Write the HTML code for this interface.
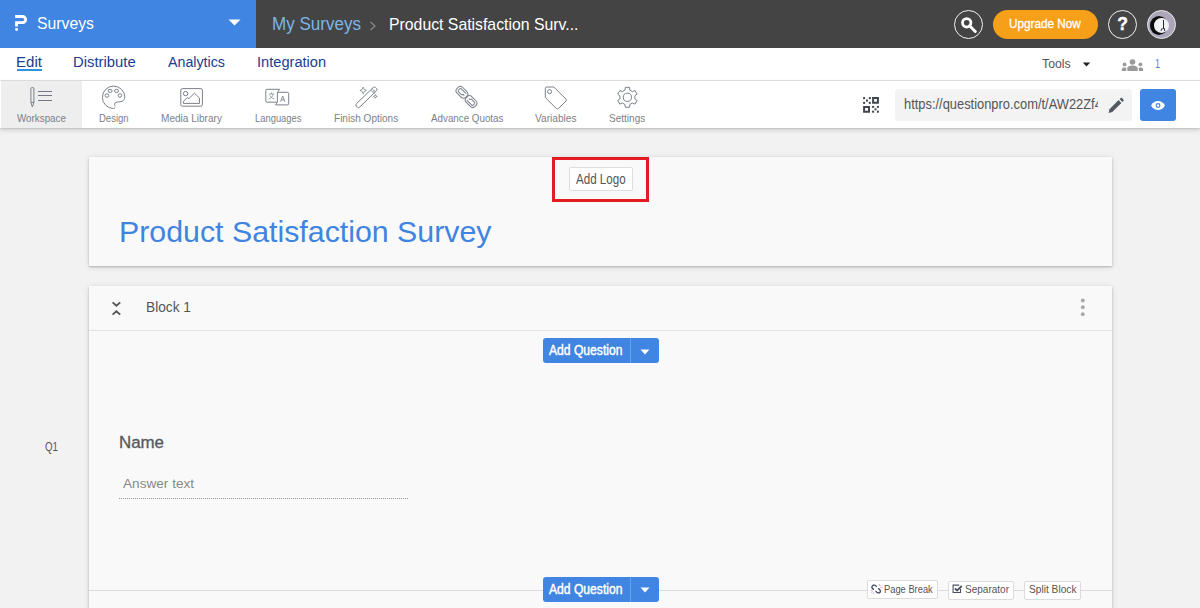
<!DOCTYPE html>
<html><head><meta charset="utf-8">
<style>
*{box-sizing:border-box;margin:0;padding:0}
html,body{width:1200px;height:608px;overflow:hidden;background:#f2f2f2;font-family:"Liberation Sans",sans-serif}
.a{position:absolute}
.t{position:absolute;white-space:nowrap;line-height:1;transform-origin:0 0}
svg{position:absolute;overflow:visible}
.card{position:absolute;background:#f9f9f9;box-shadow:0 1px 2px rgba(0,0,0,.22),0 1px 7px rgba(0,0,0,.10)}
.qb{position:absolute;left:543px;width:116px;height:25px;background:#4085e2;border-radius:3px}
.qb i{position:absolute;left:87px;top:0;width:1px;height:25px;background:#6ba3ea}
.sb{position:absolute;height:19px;background:#fff;border:1px solid #dcdcdc;border-radius:2px}
</style></head><body>
<!-- top bar -->
<div class="a" style="left:0;top:0;width:1200px;height:48px;background:#444"></div>
<div class="a" style="left:0;top:0;width:256px;height:48px;background:#4085e2"></div>
<svg style="left:0;top:0" width="40" height="48">
  <path d="M15.1,16.5 H22.6 A3.1,3.1 0 0 1 22.6,22.7 H16.5 V26.5" fill="none" stroke="#fff" stroke-width="2.8" stroke-linejoin="miter"/>
  <circle cx="16.6" cy="29.55" r="1.45" fill="#fff"/>
</svg>
<svg style="left:228px;top:19px" width="14" height="8"><path d="M0.5,0.5 H12.5 L6.5,6.5 Z" fill="#fff"/></svg>
<svg style="left:369px;top:21px" width="8" height="10"><path d="M1.5,1 L6,5 L1.5,9" fill="none" stroke="#8a8a8a" stroke-width="1.2"/></svg>
<!-- search circle -->
<div class="a" style="left:953.7px;top:9.5px;width:29.8px;height:29.8px;border:1.8px solid #f2f2f2;border-radius:50%"></div>
<svg style="left:954px;top:10px" width="30" height="30">
  <circle cx="12.7" cy="12.8" r="4.2" fill="none" stroke="#fff" stroke-width="2.8"/>
  <path d="M15.6,15.8 L21.3,21.5" stroke="#fff" stroke-width="3" stroke-linecap="round"/>
</svg>
<div class="a" style="left:993px;top:9.6px;width:105px;height:29.6px;background:#f6a01a;border-radius:15px"></div>
<div class="a" style="left:1107.8px;top:9.7px;width:29.6px;height:29.6px;border:1.8px solid #f2f2f2;border-radius:50%"></div>
<div class="t" style="left:1117.2px;top:15.6px;font-size:17.5px;font-weight:bold;color:#fff;-webkit-text-stroke:0.4px #fff">?</div>
<div class="a" style="left:1147.2px;top:9.8px;width:29px;height:29px;border-radius:50%;background:#aba6b9;border:1px solid #e6e6e6;overflow:hidden">
  <div class="a" style="left:1.6px;top:5.6px;width:18.5px;height:19px;border-radius:50%;background:radial-gradient(circle at 30% 50%,#050505 0,#0d0d0d 60%,#333 85%,#777 100%)"></div>
  <div class="a" style="left:5.9px;top:7.4px;width:14.6px;height:14.6px;border-radius:50%;background:radial-gradient(circle at 50% 45%,#f6f7fa 0,#eef0f5 55%,#dcdde6 100%)"></div>
  <div class="a" style="left:14.4px;top:9.6px;width:1.5px;height:8.5px;background:#262626"></div>
  <div class="a" style="left:13px;top:17.5px;width:1.2px;height:3.4px;background:#262626;transform:rotate(30deg)"></div>
  <div class="a" style="left:15.6px;top:17.5px;width:1.2px;height:3.4px;background:#262626;transform:rotate(-15deg)"></div>
</div>
<!-- nav -->
<div class="a" style="left:0;top:48px;width:1200px;height:32px;background:#fff"></div>
<div class="a" style="left:0;top:80px;width:1200px;height:1px;background:#e2e2e2"></div>
<div class="a" style="left:17px;top:69px;width:25px;height:2px;background:#2d95dc"></div>
<svg style="left:1082px;top:61.5px" width="9" height="5"><path d="M0.8,0.6 H8.2 L4.5,4.4 Z" fill="#222"/></svg>
<svg style="left:1121px;top:58.6px" width="23" height="13">
  <circle cx="11.5" cy="3" r="2.8" fill="#999"/>
  <path d="M6.3,12 V10 C6.3,7.4 8.6,6.5 11.5,6.5 C14.4,6.5 16.7,7.4 16.7,10 V12 Z" fill="#999"/>
  <circle cx="3.6" cy="5.4" r="1.9" fill="#999"/>
  <path d="M0.8,12 V10.8 C0.8,9 2,8.4 3.6,8.4 C4.6,8.4 5.2,8.6 5.6,8.9 C5.3,9.4 5.1,10 5.1,10.6 V12 Z" fill="#999"/>
  <circle cx="19.4" cy="5.4" r="1.9" fill="#999"/>
  <path d="M22.2,12 V10.8 C22.2,9 21,8.4 19.4,8.4 C18.4,8.4 17.8,8.6 17.4,8.9 C17.7,9.4 17.9,10 17.9,10.6 V12 Z" fill="#999"/>
</svg>
<!-- toolbar -->
<div class="a" style="left:0;top:81px;width:1200px;height:47px;background:#fff;box-shadow:0 1px 1px rgba(0,0,0,.06),0 2px 5px rgba(0,0,0,.17)"></div>
<div class="a" style="left:1px;top:81px;width:81px;height:47px;background:#eeeeee"></div>
<svg style="left:0;top:81px" width="700" height="47" fill="none" stroke="#7a7f89" stroke-width="1">
  <!-- workspace -->
  <path d="M30.9,7.4 Q30.9,6.7 31.6,6.7 H33.2 Q33.9,6.7 33.9,7.4 V21.4 H30.9 Z"/>
  <path d="M30.9,21.4 L32.4,26 L33.9,21.4"/>
  <path d="M38,10.5 H52 M38,14.5 H52 M38,19.5 H52" stroke="#727782" stroke-width="1.1"/>
  <!-- design palette -->
  <path d="M113.6,27.5 A11.2,11.2 0 1 1 124.8,16.2 C124.8,19.4 121.8,20.9 118.8,20.9 C116.5,20.9 114.6,21.5 114.6,23.3 C114.6,24.2 115.2,24.6 115.2,25.2"/>
  <path d="M114.8,26.4 L114.4,27.6"/>
  <ellipse cx="110.1" cy="9.9" rx="2" ry="1.6"/>
  <ellipse cx="116.5" cy="9.9" rx="2" ry="1.6"/>
  <ellipse cx="106.9" cy="14.5" rx="1.8" ry="1.8"/>
  <ellipse cx="119.9" cy="14.5" rx="1.8" ry="1.8"/>
  <!-- media -->
  <rect x="180.8" y="7.6" width="21.6" height="17.6" rx="1.6"/>
  <circle cx="185.6" cy="12.6" r="2.2"/>
  <path d="M183.5,22.4 V20.4 L187.3,16.5 L188.8,17.7 L194.4,12.2 L199.5,17.1 V22.4 Z" stroke-linejoin="round"/>
  <!-- languages -->
  <path d="M276.8,21.2 H267 Q265.8,21.2 265.8,20 V9.5 Q265.8,8.3 267,8.3 H279.5 L277.6,11.3"/>
  <path d="M277.6,11.3 H287.5 Q288.7,11.3 288.7,12.5 V22.7 Q288.7,23.9 287.5,23.9 H275.5 L277.4,21 V11.3"/>
  <path d="M268.8,13 H274.2 M271.5,11.4 V13 M273.2,13 C272.6,15.8 270.8,17.4 268.8,18 M269.9,14.4 C270.9,16.4 272.4,17.6 274.4,18" stroke-width="0.8" stroke="#8a8f98"/>
  <path d="M280.6,20.6 L282.7,15 L284.8,20.6 M281.3,18.9 H284.1" stroke-width="0.9" stroke="#80858f"/>
  <!-- wand -->
  <path d="M373.2,6.5 Q374.4,5.3 375.6,6.5 L376.5,7.4 Q377.7,8.6 376.5,9.8 L359.6,26.2 Q358.5,27.3 357.4,26.2 L356.3,25.1 Q355.2,24 356.3,22.9 Z"/>
  <path d="M370.6,9 L374.2,12.6 M372.1,7.6 L375.7,11.2 M372.6,11.1 L374.4,9.3" stroke-width="0.8"/>
  <path d="M363.2,87 M363.2,6 Q363.6,8.9 366.5,9.4 Q363.6,9.9 363.2,12.8 Q362.8,9.9 359.9,9.4 Q362.8,8.9 363.2,6 Z" stroke-width="0.9" stroke="#868b94"/>
  <path d="M375.4,13.6 Q375.6,15.3 377.2,15.4 Q375.6,15.6 375.4,17.2 Q375.2,15.6 373.6,15.4 Q375.2,15.3 375.4,13.6 Z" stroke-width="0.9" stroke="#868b94"/>
  <!-- chain -->
  <g transform="translate(461.9,11.3) rotate(45)">
    <rect x="-6.2" y="-4" width="12.4" height="8" rx="3.4"/>
    <path d="M4,-2 H-2.6 Q-4,-2 -4,-0.6 V0.6 Q-4,2 -2.6,2 H1.5 L2.4,0.6 H4"/>
  </g>
  <g transform="translate(471.1,20.6) rotate(45)">
    <rect x="-6.2" y="-4" width="12.4" height="8" rx="3.4"/>
    <path d="M-4,2 H2.6 Q4,2 4,0.6 V-0.6 Q4,-2 2.6,-2 H-1.5 L-2.4,-0.6 H-4"/>
  </g>
  <!-- tag -->
  <path d="M546.6,6 H553.8 L566,18.2 Q566.9,19.1 566,20 L558.3,27.7 Q557.4,28.6 556.5,27.7 L545.5,16.7 Q545.3,16.5 545.3,16.1 V7.3 Q545.3,6 546.6,6 Z"/>
  <circle cx="549.6" cy="10.7" r="2"/>
  <!-- gear -->
  <path d="M624.98,9.10 L625.28,6.32 L629.52,6.32 L629.82,9.10 L632.43,10.60 L634.98,9.47 L637.10,13.15 L634.85,14.80 L634.85,17.80 L637.10,19.45 L634.98,23.13 L632.43,22.00 L629.82,23.50 L629.52,26.28 L625.28,26.28 L624.98,23.50 L622.37,22.00 L619.82,23.13 L617.70,19.45 L619.95,17.80 L619.95,14.80 L617.70,13.15 L619.82,9.47 L622.37,10.60 Z" stroke-linejoin="round"/>
  <circle cx="627.4" cy="16.3" r="4.1"/>
</svg>
<!-- QR -->
<svg style="left:862px;top:96px" width="18" height="18" fill="#40444c">
  <rect x="1.1" y="1.1" width="2" height="2"/><rect x="6.8" y="1.1" width="2" height="2"/><rect x="3.95" y="3.55" width="2" height="2.1"/><rect x="1.1" y="5.9" width="2" height="2"/><rect x="6.8" y="5.9" width="2" height="2"/>
  <path d="M10.1,1.1 H16.9 V7.8 H10.1 Z M12.1,3.1 V5.8 H14.9 V3.1 Z" fill-rule="evenodd"/>
  <path d="M1.1,9.9 H8 V16.7 H1.1 Z M3.1,11.9 V14.7 H6 V11.9 Z" fill-rule="evenodd"/>
  <rect x="10.1" y="9.9" width="2" height="2"/><rect x="14.9" y="9.9" width="2" height="2"/><rect x="12.5" y="12.3" width="2" height="2"/><rect x="10.1" y="14.7" width="2" height="2"/><rect x="14.9" y="14.7" width="2" height="2"/>
</svg>
<div class="a" style="left:895px;top:89px;width:237px;height:31.5px;background:#f3f3f3;border-radius:3px"></div>
<div class="a" style="left:895px;top:89px;width:202.5px;height:31.5px;overflow:hidden">
<div class="t" style="left:8.50px;top:8.71px;font-size:13.81px;color:#555;transform:scaleX(0.9336);">https://questionpro.com/t/AW22Zf4</div>
</div>
<svg style="left:1106px;top:97px" width="20" height="18">
  <path d="M3.5,12.2 L12.6,3.1 L15.4,5.9 L6.3,15 L2.6,15.9 Z" fill="#555a62"/>
  <path d="M13.6,2.1 L14.6,1.1 Q15.3,0.4 16,1.1 L17.4,2.5 Q18.1,3.2 17.4,3.9 L16.4,4.9 Z" fill="#555a62"/>
</svg>
<div class="a" style="left:1140px;top:89px;width:36px;height:31.5px;background:#4085e2;border-radius:3px"></div>
<svg style="left:1150px;top:100px" width="16" height="11">
  <path d="M1,5.5 C3,2 5.5,1 8,1 C10.5,1 13,2 15,5.5 C13,9 10.5,10 8,10 C5.5,10 3,9 1,5.5 Z" fill="#fff"/>
  <circle cx="8" cy="5.5" r="2.4" fill="#4085e2"/>
  <circle cx="8" cy="5.5" r="1.2" fill="#fff"/>
</svg>
<!-- card 1 -->
<div class="card" style="left:89px;top:157px;width:1023px;height:108.5px"></div>
<div class="a" style="left:552px;top:157px;width:97px;height:45px;border:3px solid #e31c23"></div>
<div class="a" style="left:568.5px;top:167.3px;width:64.3px;height:24.2px;background:#fff;border:1px solid #dedede;border-radius:2px"></div>
<!-- card 2 -->
<div class="card" style="left:89px;top:286px;width:1023px;height:340px"></div>
<div class="a" style="left:89px;top:330px;width:1023px;height:1px;background:#e3e3e3"></div>
<svg style="left:110px;top:300px" width="13" height="17" fill="none" stroke="#555" stroke-width="1.9">
  <path d="M2.6,2.4 L6.4,5.8 L10.2,2.4"/>
  <path d="M2.6,14.6 L6.4,11.2 L10.2,14.6"/>
</svg>
<svg style="left:1078px;top:297px" width="10" height="20" fill="#a8a8a8">
  <circle cx="4.8" cy="3.5" r="1.9"/><circle cx="4.8" cy="10.2" r="1.9"/><circle cx="4.8" cy="17.2" r="1.9"/>
</svg>
<div class="qb" style="top:338.4px"><i></i></div>
<svg style="left:640px;top:348.5px" width="10" height="6"><path d="M0.5,0.5 H9.5 L5,5.5 Z" fill="#fff"/></svg>
<div class="a" style="left:119px;top:498px;width:289px;height:1px;border-top:1px dotted #999"></div>
<div class="a" style="left:89px;top:590px;width:1023px;height:1px;background:#dcdcdc"></div>
<div class="qb" style="top:577.2px"><i></i></div>
<svg style="left:640px;top:587.3px" width="10" height="6"><path d="M0.5,0.5 H9.5 L5,5.5 Z" fill="#fff"/></svg>
<div class="sb" style="left:866.5px;top:580.2px;width:71.5px"></div>
<div class="sb" style="left:948.3px;top:580.5px;width:65.3px"></div>
<div class="sb" style="left:1024.4px;top:581.2px;width:57px"></div>
<svg style="left:870px;top:583px" width="13" height="13" fill="none" stroke="#404a62" stroke-width="1.3" stroke-linecap="round">
  <path d="M6.4,3.5 C5.4,1.9 3.1,1.5 2.2,3 C1.4,4.4 2.2,5.6 3.5,6.4"/>
  <path d="M5.9,8.3 C6.8,9.9 9,10.5 10.1,9.3 C10.9,8.3 10.2,6.6 8.5,5.6"/>
  <path d="M9.4,1.3 L9.7,2.5 M11.5,2.1 L10.6,3.1 M12.3,4.3 L11,4.4 M0.8,7.2 L2.1,7.3 M1.2,9.6 L2.2,8.6 M3.3,10.8 L3.4,9.5" stroke="#d6a3aa" stroke-width="0.8"/>
</svg>
<svg style="left:952px;top:584px" width="12" height="10" fill="none" stroke="#4a5060">
  <path d="M8.5,5 V8.5 H1.1 V1.1 H7.2" stroke-width="1.1"/>
  <path d="M2.9,4.3 L5.1,6.5 L9.8,2" stroke-width="1.8"/>
</svg>
<div class="t" style="left:37.00px;top:15.77px;font-size:16.57px;color:#fff;transform:scaleX(0.9523);">Surveys</div>
<div class="t" style="left:271.90px;top:15.00px;font-size:18.90px;color:#7db6e6;transform:scaleX(0.9018);">My Surveys</div>
<div class="t" style="left:388.50px;top:16.57px;font-size:16.57px;color:#fff;transform:scaleX(0.9541);">Product Satisfaction Surv...</div>
<div class="t" style="left:1008.50px;top:16.88px;font-size:13.37px;color:#fff;-webkit-text-stroke:0.35px #fff;transform:scaleX(0.8769);">Upgrade Now</div>
<div class="t" style="left:16.00px;top:54.59px;font-size:14.53px;color:#213d8f;transform:scaleX(1.0381);">Edit</div>
<div class="t" style="left:73.00px;top:54.59px;font-size:14.53px;color:#213d8f;transform:scaleX(1.0229);">Distribute</div>
<div class="t" style="left:168.30px;top:54.59px;font-size:14.53px;color:#213d8f;transform:scaleX(0.9800);">Analytics</div>
<div class="t" style="left:256.60px;top:54.59px;font-size:14.53px;color:#213d8f;transform:scaleX(1.0075);">Integration</div>
<div class="t" style="left:1041.50px;top:56.73px;font-size:13.08px;color:#555;transform:scaleX(0.9398);">Tools</div>
<div class="t" style="left:1155.00px;top:56.93px;font-size:13.08px;color:#4a86e0;transform:scaleX(0.6872);">1</div>
<div class="t" style="left:17.00px;top:112.67px;font-size:10.90px;color:#7b7f89;transform:scaleX(0.9020);">Workspace</div>
<div class="t" style="left:98.50px;top:112.67px;font-size:10.90px;color:#7b7f89;transform:scaleX(0.8723);">Design</div>
<div class="t" style="left:161.00px;top:112.67px;font-size:10.90px;color:#7b7f89;transform:scaleX(0.9236);">Media Library</div>
<div class="t" style="left:254.75px;top:112.67px;font-size:10.90px;color:#7b7f89;transform:scaleX(0.8618);">Languages</div>
<div class="t" style="left:333.75px;top:112.67px;font-size:10.90px;color:#7b7f89;transform:scaleX(0.9221);">Finish Options</div>
<div class="t" style="left:430.60px;top:112.67px;font-size:10.90px;color:#7b7f89;transform:scaleX(0.8995);">Advance Quotas</div>
<div class="t" style="left:535.00px;top:112.67px;font-size:10.90px;color:#7b7f89;transform:scaleX(0.9297);">Variables</div>
<div class="t" style="left:608.75px;top:112.67px;font-size:10.90px;color:#7b7f89;transform:scaleX(0.9203);">Settings</div>
<div class="t" style="left:575.50px;top:172.61px;font-size:13.81px;color:#555;transform:scaleX(0.8406);">Add Logo</div>
<div class="t" style="left:119.30px;top:217.64px;font-size:28.78px;color:#3f84e0;transform:scaleX(1.0542);">Product Satisfaction Survey</div>
<div class="t" style="left:146.00px;top:299.08px;font-size:15.26px;color:#555;transform:scaleX(0.8991);">Block 1</div>
<div class="t" style="left:549.20px;top:342.94px;font-size:14.24px;color:#fff;-webkit-text-stroke:0.45px #fff;transform:scaleX(0.8515);">Add Question</div>
<div class="t" style="left:45.30px;top:441.29px;font-size:12.65px;color:#555;transform:scaleX(0.7707);">Q1</div>
<div class="t" style="left:118.80px;top:434.93px;font-size:16.86px;color:#55595f;-webkit-text-stroke:0.35px #55595f;transform:scaleX(1.0005);">Name</div>
<div class="t" style="left:122.80px;top:476.83px;font-size:13.66px;color:#888;transform:scaleX(0.9961);">Answer text</div>
<div class="t" style="left:549.20px;top:581.94px;font-size:14.24px;color:#fff;-webkit-text-stroke:0.45px #fff;transform:scaleX(0.8515);">Add Question</div>
<div class="t" style="left:883.70px;top:583.92px;font-size:11.19px;color:#555;transform:scaleX(0.8344);">Page Break</div>
<div class="t" style="left:964.70px;top:583.92px;font-size:11.19px;color:#555;transform:scaleX(0.8952);">Separator</div>
<div class="t" style="left:1029.20px;top:584.42px;font-size:11.19px;color:#555;transform:scaleX(0.9091);">Split Block</div>
</body></html>
